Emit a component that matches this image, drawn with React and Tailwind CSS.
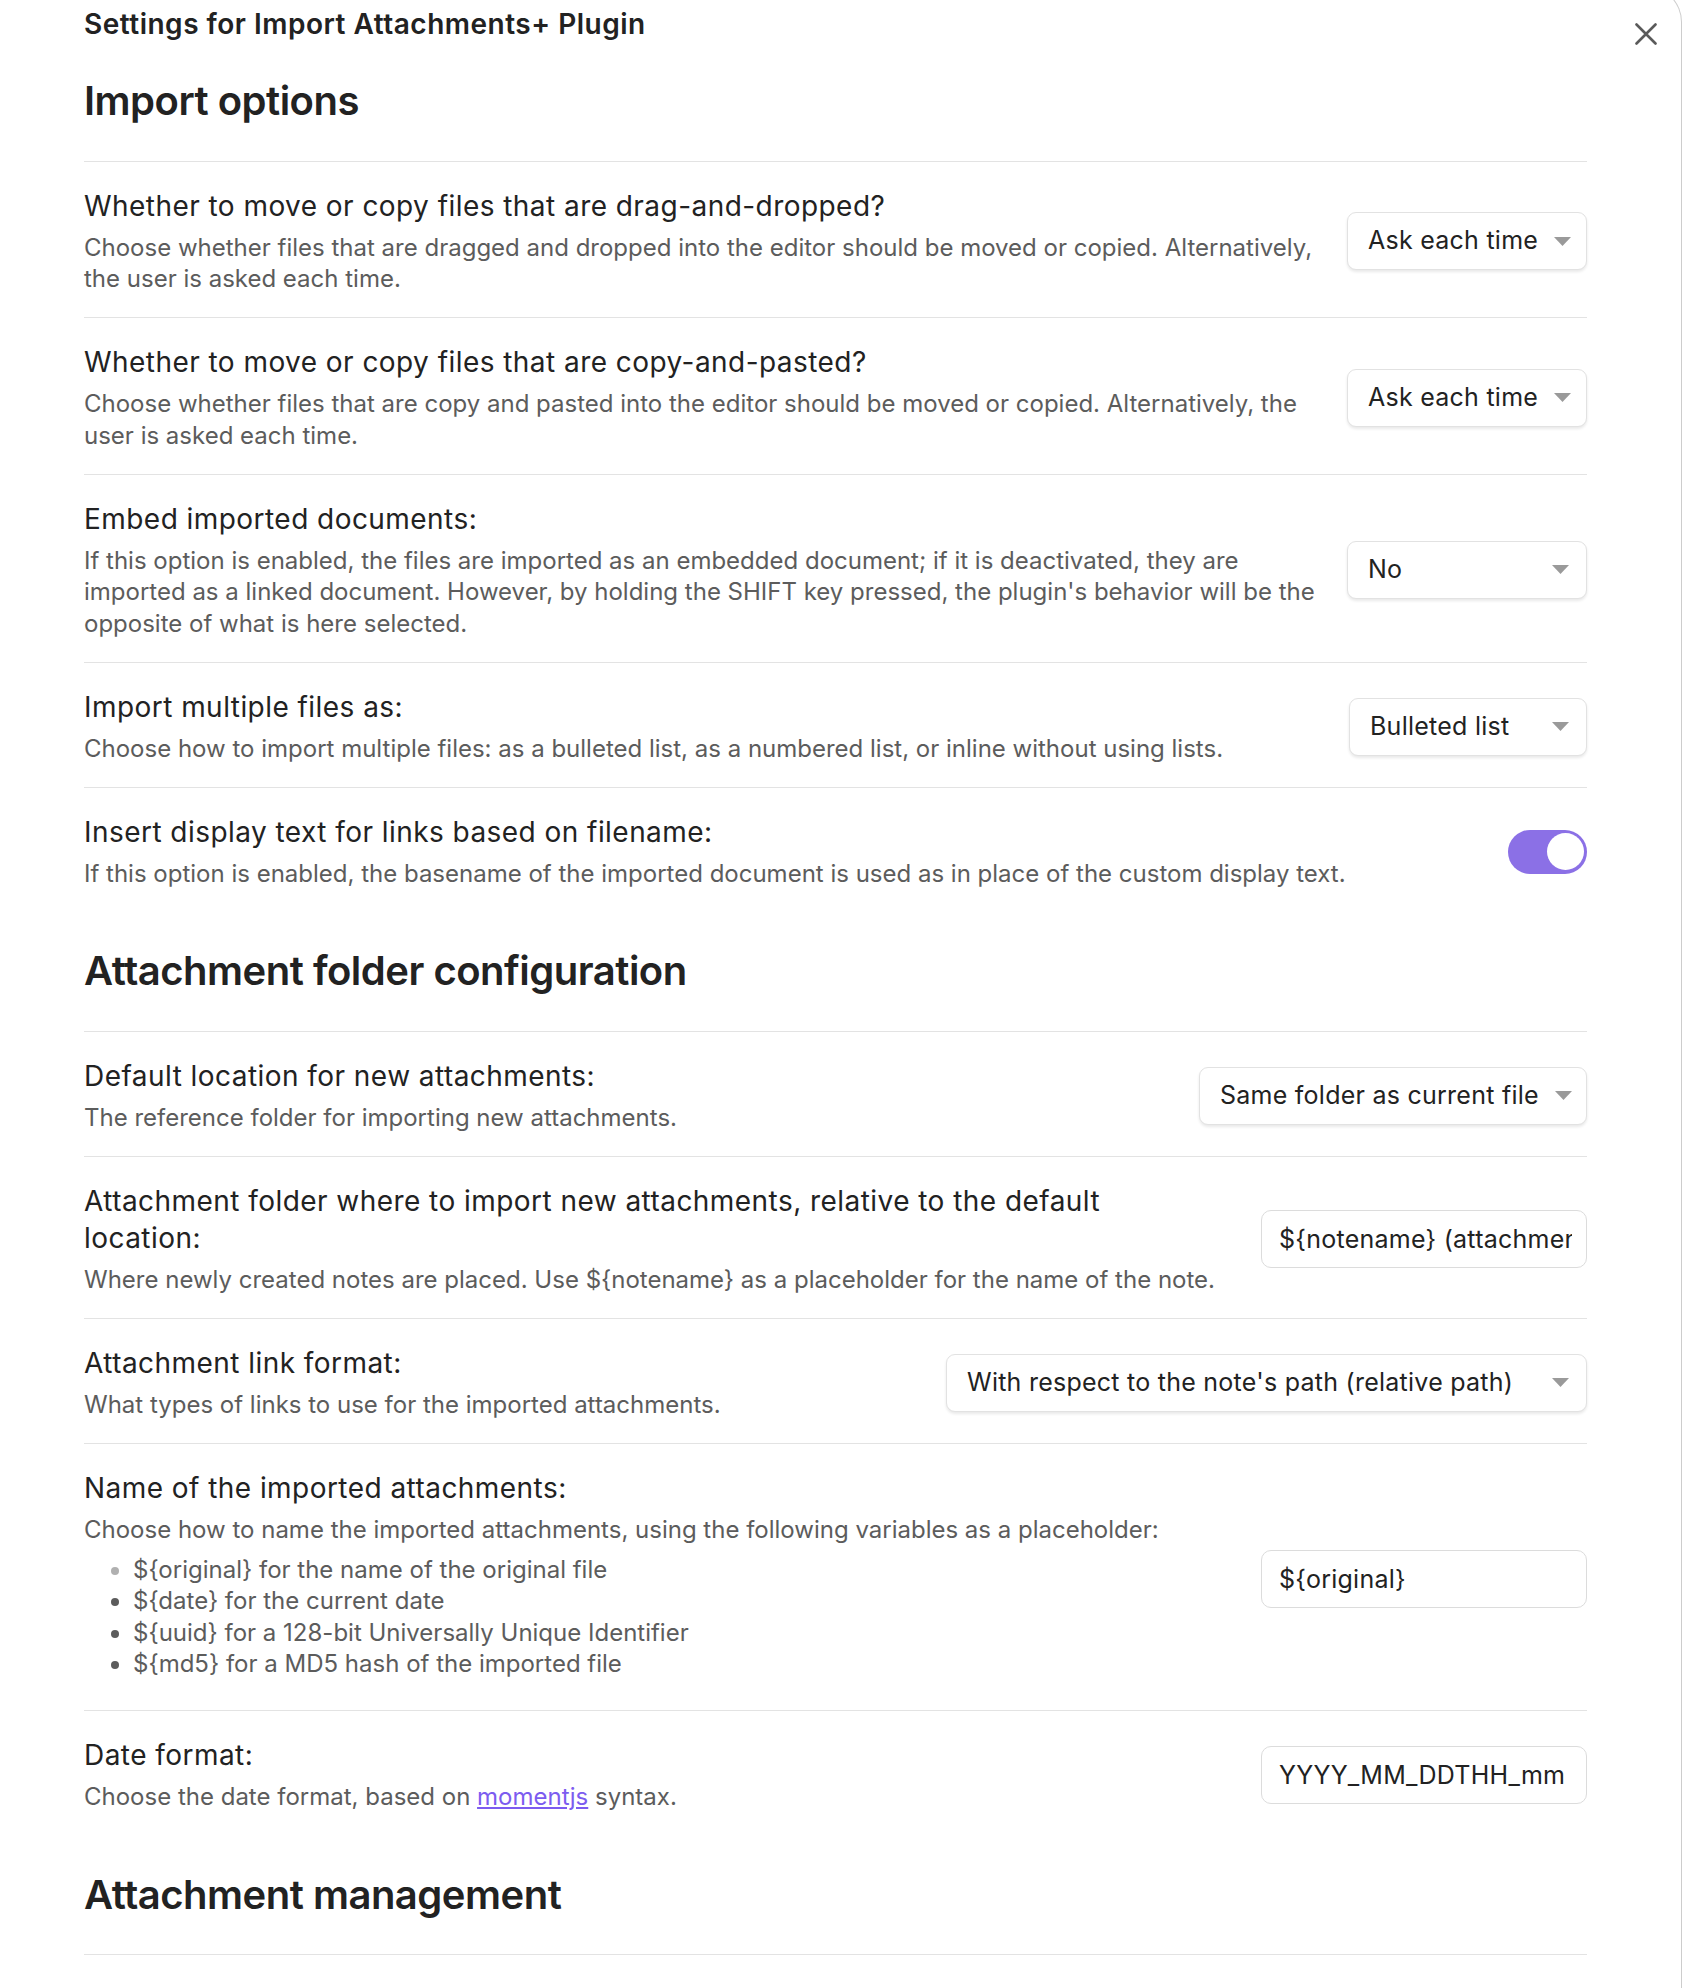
import React from 'react';

const FONT = { fontFamily: 'Inter, "Noto Sans", sans-serif' };

function Caret() {
  return (
    <svg width="17" height="9" viewBox="0 0 17 9" className="shrink-0">
      <path d="M0 0 L17 0 L8.5 9 Z" fill="#9a9a9a" />
    </svg>
  );
}

function Dropdown({ value, width }) {
  return (
    <div
      className={`flex h-[58px] items-center justify-between gap-4 rounded-[9px] border border-[#e2e2e2] bg-white pl-[20px] pr-[17px] text-[25px] tracking-[0.25px] text-[#222] shadow-[0_2px_3px_rgba(0,0,0,0.09)] ${width}`}
    >
      <span className="whitespace-nowrap">{value}</span>
      <Caret />
    </div>
  );
}

function TextInput({ value }) {
  return (
    <input
      readOnly
      value={value}
      style={FONT}
      className="h-[58px] w-[326px] rounded-[10px] border border-[#dcdcdc] bg-white pl-[17px] pr-[14px] text-[25px] tracking-[0.25px] text-[#222] outline-none"
    />
  );
}

function Toggle() {
  return (
    <div className="flex h-[44px] w-[79px] items-center justify-end rounded-full bg-[#8b70e6] pr-[3px]">
      <div className="h-[37px] w-[37px] rounded-full bg-white" />
    </div>
  );
}

function Setting({ name, children, control }) {
  return (
    <div className="flex items-center border-t border-[#e3e3e3] pt-[26px] pb-[22.6px]">
      <div className="min-w-0 flex-1">
        <div className="text-[28px] leading-[37px] tracking-[0.45px] text-[#222]">{name}</div>
        <div className="mt-[7px] text-[24px] leading-[31.5px] text-[#5c5c5c]">{children}</div>
      </div>
      <div className="ml-[32px] shrink-0">{control}</div>
    </div>
  );
}

function Heading({ children, height }) {
  return (
    <div className={`flex items-center ${height}`}>
      <h2 className="text-[40px] font-semibold tracking-[-0.5px] text-[#222]">{children}</h2>
    </div>
  );
}

export default function App() {
  return (
    <div style={FONT} className="min-h-screen bg-white">
      <div className="relative -mt-[14px] min-h-[2002px] rounded-tr-[36px] border-t border-r border-[#cdcdcd] bg-white pl-[84px] pr-[94px] pt-[14px]">
        <button
          type="button"
          aria-label="Close"
          className="absolute right-[24px] top-[36px] flex h-[22px] w-[22px] items-center justify-center"
        >
          <svg width="22" height="22" viewBox="0 0 22 22">
            <path d="M1.5 1.5 L20.5 20.5 M20.5 1.5 L1.5 20.5" stroke="#5a5a5a" strokeWidth="2.6" strokeLinecap="round" />
          </svg>
        </button>

        <div className="pt-[6px] text-[28px] font-semibold leading-[34px] tracking-[0.5px] text-[#222]">
          Settings for Import Attachments+ Plugin
        </div>

        <Heading height="h-[119.5px]">Import options</Heading>

        <Setting
          name="Whether to move or copy files that are drag-and-dropped?"
          control={<Dropdown value="Ask each time" width="w-[240px]" />}
        >
          Choose whether files that are dragged and dropped into the editor should be moved or copied. Alternatively, the user is asked each time.
        </Setting>

        <Setting
          name="Whether to move or copy files that are copy-and-pasted?"
          control={<Dropdown value="Ask each time" width="w-[240px]" />}
        >
          Choose whether files that are copy and pasted into the editor should be moved or copied. Alternatively, the user is asked each time.
        </Setting>

        <Setting
          name="Embed imported documents:"
          control={<Dropdown value="No" width="w-[240px]" />}
        >
          If this option is enabled, the files are imported as an embedded document; if it is deactivated, they are imported as a linked document. However, by holding the SHIFT key pressed, the plugin's behavior will be the opposite of what is here selected.
        </Setting>

        <Setting
          name="Import multiple files as:"
          control={<Dropdown value="Bulleted list" width="w-[238px]" />}
        >
          Choose how to import multiple files: as a bulleted list, as a numbered list, or inline without using lists.
        </Setting>

        <Setting name="Insert display text for links based on filename:" control={<Toggle />}>
          If this option is enabled, the basename of the imported document is used as in place of the custom display text.
        </Setting>

        <Heading height="h-[119px]">Attachment folder configuration</Heading>

        <Setting
          name="Default location for new attachments:"
          control={<Dropdown value="Same folder as current file" width="w-[388px]" />}
        >
          The reference folder for importing new attachments.
        </Setting>

        <Setting
          name={
            <>
              Attachment folder where to import new attachments, relative to the default
              <br />
              location:
            </>
          }
          control={<TextInput value="${notename} (attachments)" />}
        >
          Where newly created notes are placed. Use ${'{notename}'} as a placeholder for the name of the note.
        </Setting>

        <Setting
          name="Attachment link format:"
          control={<Dropdown value="With respect to the note's path (relative path)" width="w-[641px]" />}
        >
          What types of links to use for the imported attachments.
        </Setting>

        <Setting name="Name of the imported attachments:" control={<TextInput value="${original}" />}>
          Choose how to name the imported attachments, using the following variables as a placeholder:
          <ul className="my-[8px] list-disc pl-[49px] leading-[31.5px]">
            <li className="marker:text-[#b0b0b0]">${'{original}'} for the name of the original file</li>
            <li>${'{date}'} for the current date</li>
            <li>${'{uuid}'} for a 128-bit Universally Unique Identifier</li>
            <li>${'{md5}'} for a MD5 hash of the imported file</li>
          </ul>
        </Setting>

        <Setting name="Date format:" control={<TextInput value="YYYY_MM_DDTHH_mm" />}>
          Choose the date format, based on{' '}
          <a href="#" className="text-[#7c5cf0] underline underline-offset-2">
            momentjs
          </a>{' '}
          syntax.
        </Setting>

        <Heading height="h-[119px]">Attachment management</Heading>

        <div className="h-[40px] border-t border-[#e3e3e3]" />
      </div>
    </div>
  );
}
